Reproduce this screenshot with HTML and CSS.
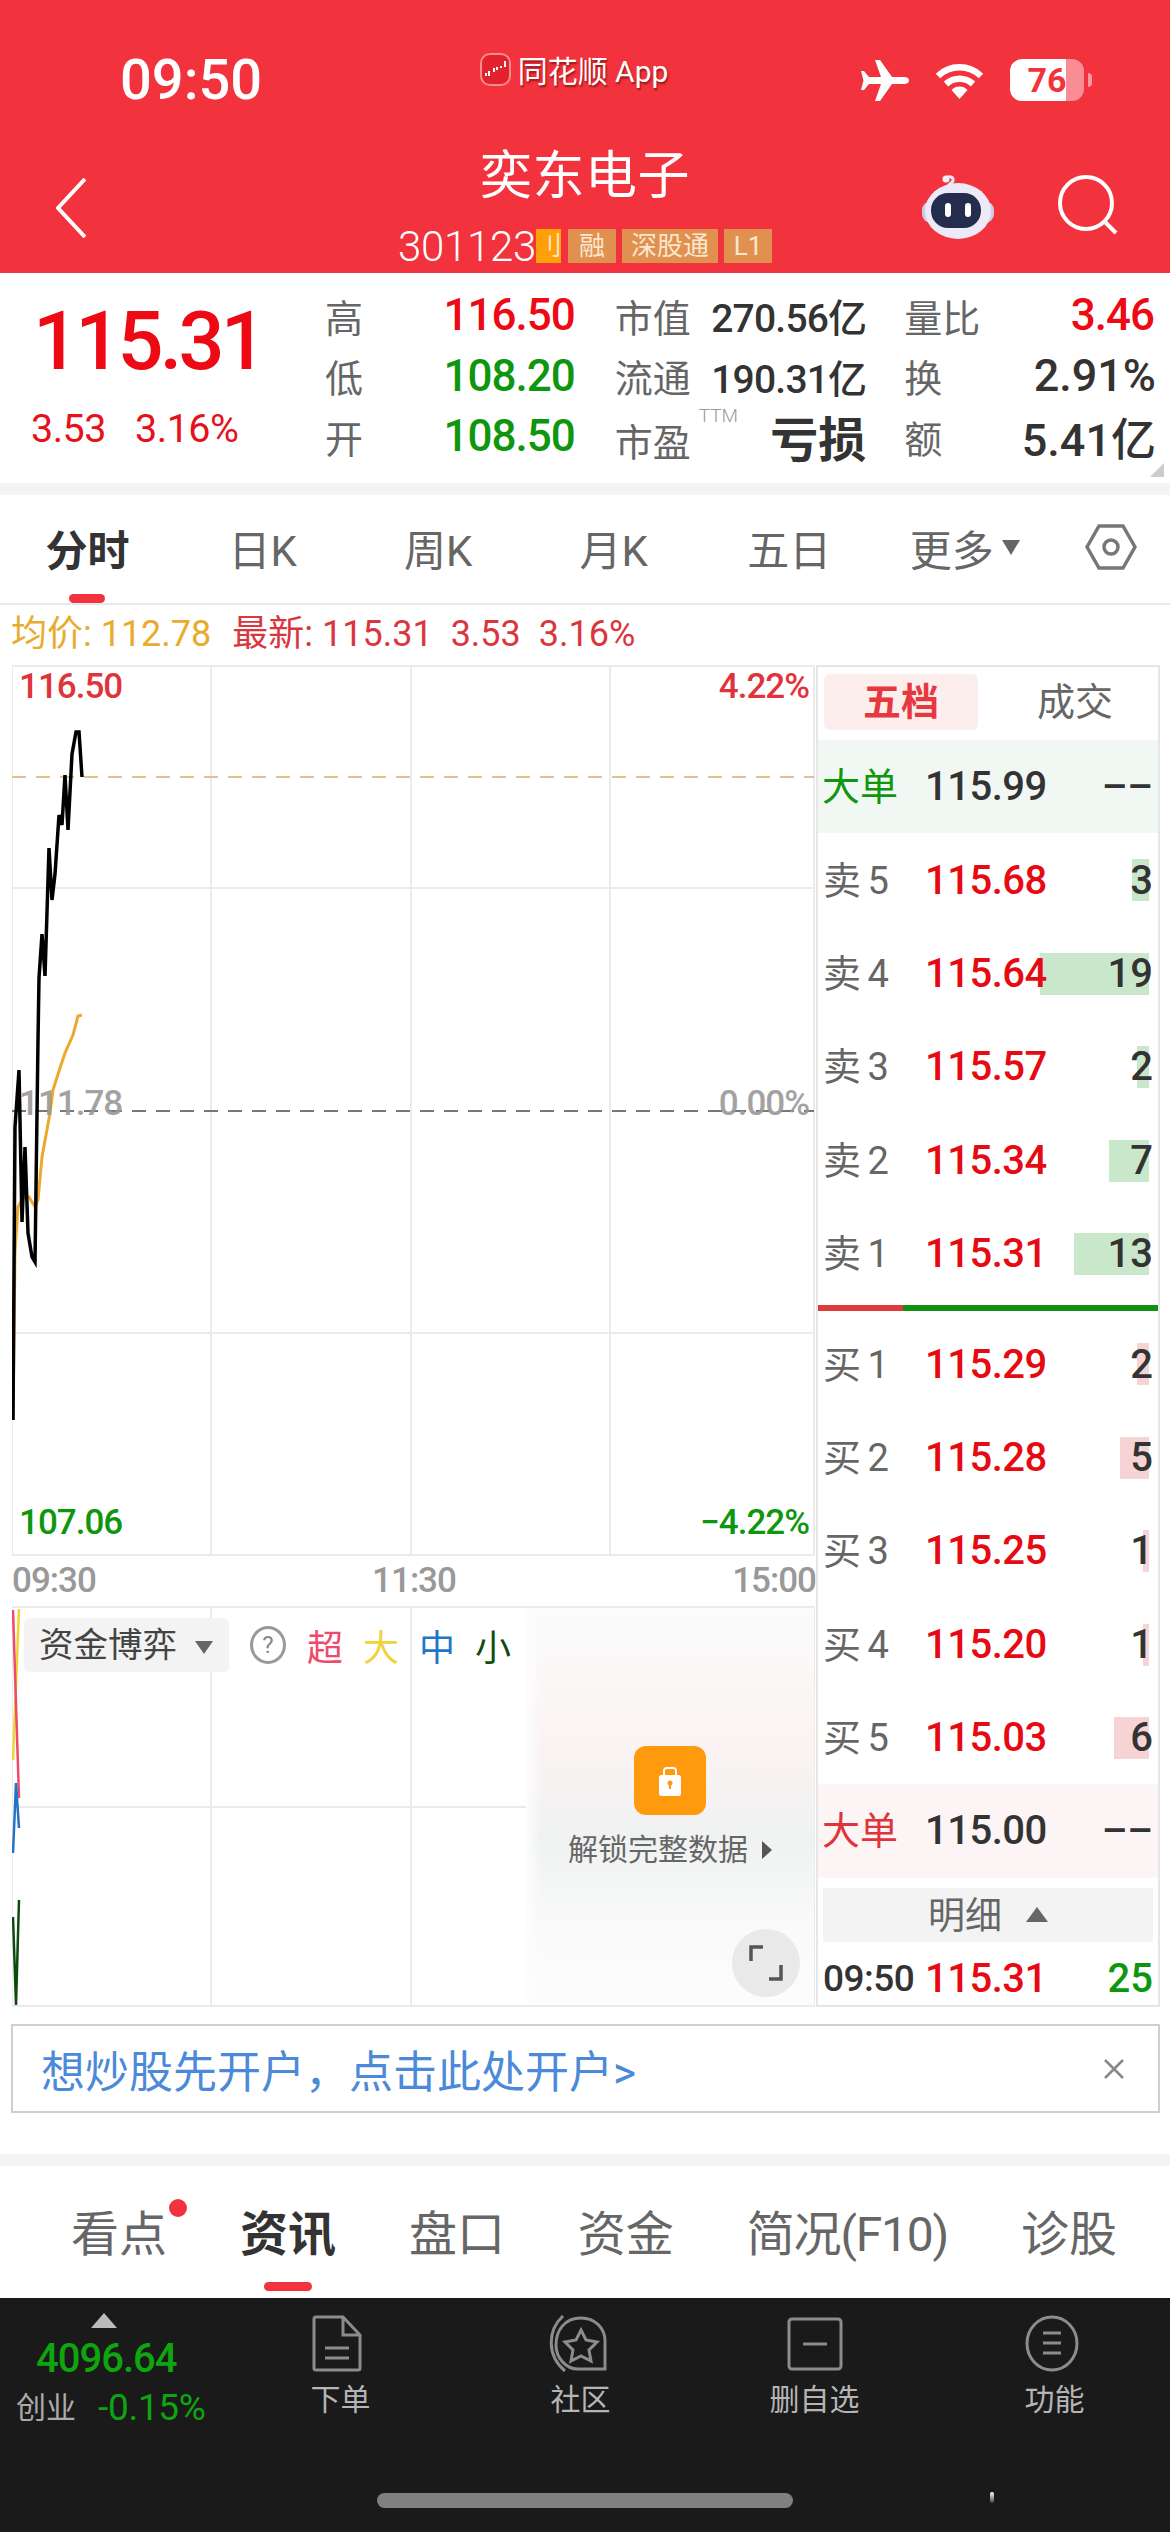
FILE: index.html

```html
<!DOCTYPE html>
<html lang="zh-CN">
<head>
  <meta charset="UTF-8" />
  <meta name="viewport" content="width=device-width, initial-scale=1.0">
  <title>奕东电子</title>
  <link rel="stylesheet" href="styles.css">
</head>
<body>

  <header class="header">
    <div class="status">
      <div class="time">09:50</div>
      <div class="source">
        <svg class="source-logo" width="31" height="33" viewBox="0 0 31 33">
          <rect x="1" y="1" width="29" height="31" rx="9" fill="#e2222c" stroke="#f98b8f" stroke-width="2"/>
          <path d="M6 23v-3M9 23v-5M14 19v-4M17 17v-3M21 15v-2M25 14v-6" stroke="#fff" stroke-width="2" fill="none"/>
        </svg>
        <span>同花顺 App</span>
      </div>
      <div class="status-icons">
        <svg width="48" height="41" viewBox="0 0 48 41"><path fill="#fff" d="M48 20.5c0-2.5-2.5-3.5-5-3.5H31L19 0h-5l6 17H8L3 11H0l2.5 9.5L0 30h3l5-6h12l-6 17h5l12-17h12c2.500 0 5-1 5-3.500z"/></svg>
        <svg width="51" height="37" viewBox="0 0 51 37">
          <path d="M4 14a31 31 0 0 1 43 0M12 22a20 20 0 0 1 27 0" fill="none" stroke="#fff" stroke-width="6.500"/>
          <path d="M25.500 37l-8-9a11 11 0 0 1 16 0z" fill="#fff"/>
        </svg>
        <div class="battery">76</div>
      </div>
    </div>

    <div class="nav">
      <div class="nav-back">
        <svg width="30" height="60" viewBox="0 0 30 60"><path d="M29 1L2 30l27 29" fill="none" stroke="#fff" stroke-width="4"/></svg>
      </div>
      <div class="nav-title">
        <div class="stock-name">奕东电子</div>
        <div class="stock-code">
          <span class="code">301123</span>
          <span class="tag tag-cut">刂</span>
          <span class="tag tag-rong">融</span>
          <span class="tag tag-sgt">深股通</span>
          <span class="tag tag-l1">L1</span>
        </div>
      </div>
      <div class="nav-actions">
        <svg width="72" height="64" viewBox="0 0 72 64">
          <path d="M26 12c1-5 6-3 5-8-1-3-6-3-7 0" fill="none" stroke="#e8e4f5" stroke-width="3"/>
          <circle cx="24" cy="4" r="3.500" fill="#f3f0fb"/>
          <rect x="0" y="26" width="72" height="22" rx="9" fill="#cfcbe8"/>
          <ellipse cx="36" cy="36" rx="33" ry="28" fill="#edeaf8"/>
          <rect x="9" y="18" width="50" height="35" rx="17" fill="#242d4d"/>
          <rect x="23" y="28" width="6" height="14" rx="3" fill="#fff"/>
          <rect x="43" y="28" width="6" height="14" rx="3" fill="#fff"/>
        </svg>
        <svg width="60" height="60" viewBox="0 0 60 60">
          <circle cx="28" cy="28" r="26" fill="none" stroke="#fff" stroke-width="4"/>
          <path d="M47 47l11 11" stroke="#fff" stroke-width="4" fill="none"/>
        </svg>
      </div>
    </div>
  </header>

  <section class="quote">
    <div class="quote-main">
      <div class="last-price">115.31</div>
      <div class="change"><span>3.53</span><span>3.16%</span></div>
    </div>
    <div class="quote-grid">
      <div class="cell"><span class="cell-label">高</span><span class="cell-value up">116.50</span></div>
      <div class="cell"><span class="cell-label">市值</span><span class="cell-value small">270.56亿</span></div>
      <div class="cell"><span class="cell-label">量比</span><span class="cell-value up">3.46</span></div>
      <div class="cell"><span class="cell-label">低</span><span class="cell-value down">108.20</span></div>
      <div class="cell"><span class="cell-label">流通</span><span class="cell-value small">190.31亿</span></div>
      <div class="cell"><span class="cell-label">换</span><span class="cell-value">2.91%</span></div>
      <div class="cell"><span class="cell-label">开</span><span class="cell-value down">108.50</span></div>
      <div class="cell"><span class="cell-label pe">市盈<sup>TTM</sup></span><span class="cell-value loss">亏损</span></div>
      <div class="cell"><span class="cell-label">额</span><span class="cell-value">5.41亿</span></div>
    </div>
    <div class="corner"></div>
  </section>

  <div class="band"></div>

  <nav class="period-tabs">
    <div class="period active">分时</div>
    <div class="period">日K</div>
    <div class="period">周K</div>
    <div class="period">月K</div>
    <div class="period">五日</div>
    <div class="period">更多<i class="caret-down"></i></div>
    <div class="period">
      <svg width="52" height="46" viewBox="0 0 52 46">
        <path d="M14 2h24l12 21-12 21H14L2 23z" fill="none" stroke="#777" stroke-width="3.500"/>
        <circle cx="26" cy="23" r="7" fill="none" stroke="#777" stroke-width="3.500"/>
      </svg>
    </div>
  </nav>

  <div class="legend">
    <span class="avg">均价: 112.78</span>
    <span class="latest"><span>最新: 115.31</span><span>3.53</span><span>3.16%</span></span>
  </div>

  <main class="board">
    <div class="charts">
      <div class="price-chart">
        <svg width="803" height="891" viewBox="12 665 803 891">
          <g stroke="#ebebeb" stroke-width="2" fill="none">
            <path d="M12 666H814M12 888H814M12 1333H814M12 1555H814"/>
            <path d="M12 665V1556M211 665V1556M411 665V1556M610 665V1556M814 665V1556"/>
          </g>
          <path d="M12 777H814" stroke="#e6c08c" stroke-width="2" stroke-dasharray="14 10"/>
          <path d="M12 1111H814" stroke="#777" stroke-width="2" stroke-dasharray="14 10"/>
          <path d="M13 1420L15 1253 18 1207 23 1198 29 1197 35 1207 38 1200 42 1157 50 1113 53 1090 60 1068 65 1053 73 1035 78 1016 82 1015" fill="none" stroke="#eba92f" stroke-width="3"/>
          <path d="M13 1420L15 1127 19 1070 22 1222 25 1147 28 1233 32 1257 35 1262 38 1040 39 978 42 934 45 976 49 848 52 900 55 874 59 815 62 825 65 775 68 830 72 754 76 732 79 732 82 777" fill="none" stroke="#000" stroke-width="3.500"/>
        </svg>
        <span class="axis-label top left up-soft">116.50</span>
        <span class="axis-label top right up-soft">4.22%</span>
        <span class="axis-label mid left flat">111.78</span>
        <span class="axis-label mid right flat">0.00%</span>
        <span class="axis-label bottom left down">107.06</span>
        <span class="axis-label bottom right down">−4.22%</span>
      </div>

      <div class="time-axis"><span>09:30</span><span>11:30</span><span>15:00</span></div>

      <div class="flow-chart">
        <svg width="803" height="401" viewBox="12 1606 803 401">
          <g stroke="#ebebeb" stroke-width="2" fill="none">
            <path d="M12 1607H814M12 1807H814M12 2006H814"/>
            <path d="M12 1606V2007M211 1606V2007M411 1606V2007M814 1606V2007"/>
          </g>
          <path d="M19 1609L13 1760" stroke="#f3d233" stroke-width="2.500" fill="none"/>
          <path d="M13 1610L19 1798" stroke="#ee4b68" stroke-width="2.500" fill="none"/>
          <path d="M13 1853L16 1783 19 1828" stroke="#2274c4" stroke-width="2.500" fill="none"/>
          <path d="M13 1917L16 2005 19 1900" stroke="#0e4a0c" stroke-width="2.500" fill="none"/>
        </svg>

        <div class="flow-tools">
          <div class="flow-select">资金博弈<i class="caret-down big"></i></div>
          <div class="help">?</div>
          <span class="size-super">超</span>
          <span class="size-large">大</span>
          <span class="size-mid">中</span>
          <span class="size-small">小</span>
        </div>

        <div class="lock-panel">
          <div class="lock-badge">
            <svg width="22" height="30" viewBox="0 0 22 30">
              <path d="M5 10V5a3 3 0 0 1 3-3h6a3 3 0 0 1 3 3v5" fill="none" stroke="#fff" stroke-width="2"/>
              <rect x="0" y="9" width="22" height="21" rx="2.500" fill="#fff"/>
              <circle cx="11" cy="17" r="2.500" fill="#ff9a0e"/>
              <rect x="10" y="18" width="2" height="5" fill="#ff9a0e"/>
            </svg>
          </div>
          <div class="lock-text">解锁完整数据<i class="caret-right"></i></div>
        </div>

        <div class="expand">
          <svg width="34" height="36" viewBox="0 0 34 36">
            <path d="M14 2H2v14M32 20v14H20" fill="none" stroke="#555" stroke-width="3.500"/>
          </svg>
        </div>
      </div>
    </div>

    <aside class="book">
      <div class="book-tabs">
        <div class="book-tab active">五档</div>
        <div class="book-tab">成交</div>
      </div>

      <div class="row big-sell"><span class="row-label">大单</span><span class="row-price flat-price">115.99</span><span class="row-qty">––</span></div>

      <div class="row"><span class="row-label">卖 5</span><span class="row-price">115.68</span><i class="bar sell" style="width:17px"></i><span class="row-qty">3</span></div>
      <div class="row"><span class="row-label">卖 4</span><span class="row-price">115.64</span><i class="bar sell" style="width:109px"></i><span class="row-qty">19</span></div>
      <div class="row"><span class="row-label">卖 3</span><span class="row-price">115.57</span><i class="bar sell" style="width:12px"></i><span class="row-qty">2</span></div>
      <div class="row"><span class="row-label">卖 2</span><span class="row-price">115.34</span><i class="bar sell" style="width:40px"></i><span class="row-qty">7</span></div>
      <div class="row"><span class="row-label">卖 1</span><span class="row-price">115.31</span><i class="bar sell" style="width:75px"></i><span class="row-qty">13</span></div>

      <div class="book-split"></div>

      <div class="row"><span class="row-label">买 1</span><span class="row-price">115.29</span><i class="bar buy" style="width:12px"></i><span class="row-qty">2</span></div>
      <div class="row"><span class="row-label">买 2</span><span class="row-price">115.28</span><i class="bar buy" style="width:29px"></i><span class="row-qty">5</span></div>
      <div class="row"><span class="row-label">买 3</span><span class="row-price">115.25</span><i class="bar buy" style="width:6px"></i><span class="row-qty">1</span></div>
      <div class="row"><span class="row-label">买 4</span><span class="row-price">115.20</span><i class="bar buy" style="width:6px"></i><span class="row-qty">1</span></div>
      <div class="row"><span class="row-label">买 5</span><span class="row-price">115.03</span><i class="bar buy" style="width:35px"></i><span class="row-qty">6</span></div>

      <div class="row big-buy"><span class="row-label">大单</span><span class="row-price flat-price">115.00</span><span class="row-qty">––</span></div>

      <div class="detail-head"><span>明细</span><i class="caret-up"></i></div>
      <div class="row detail-row"><span class="row-label">09:50</span><span class="row-price">115.31</span><span class="row-qty green">25</span></div>
    </aside>
  </main>

  <div class="banner">
    <span>想炒股先开户，点击此处开户&gt;</span>
    <svg width="22" height="22" viewBox="0 0 22 22"><path d="M2 2l18 18M20 2L2 20" stroke="#888" stroke-width="2.500" fill="none"/></svg>
  </div>

  <div class="band band-low"></div>

  <nav class="info-tabs">
    <div class="info-tab has-dot">看点</div>
    <div class="info-tab active">资讯</div>
    <div class="info-tab">盘口</div>
    <div class="info-tab">资金</div>
    <div class="info-tab f10">简况(F10)</div>
    <div class="info-tab">诊股</div>
  </nav>

  <footer class="dock">
    <div class="index">
      <i class="index-arrow"></i>
      <div class="index-value">4096.64</div>
      <div class="index-row"><span class="index-name">创业</span><span class="index-pct">-0.15%</span></div>
    </div>
    <div class="dock-item">
      <svg class="doc-icon" width="50" height="57" viewBox="0 0 50 57">
        <path d="M4 2h27l17 18v33a2 2 0 0 1-2 2H4a2 2 0 0 1-2-2V4a2 2 0 0 1 2-2zM31 2v18h17M13 33h24M13 43h24" fill="none" stroke="#8c8c8c" stroke-width="3"/>
      </svg>
      <span>下单</span>
    </div>
    <div class="dock-item nudge">
      <svg width="60" height="57" viewBox="0 0 60 57">
        <path d="M15 1C-1 16-1 41 17 56" fill="none" stroke="#8c8c8c" stroke-width="3"/>
        <path d="M33 3C17 3 8 15 8 30c0 13 10 24 22 24h27V26C57 13 47 3 33 3z" fill="none" stroke="#8c8c8c" stroke-width="3"/>
        <path d="M33 15l5 10 11 2-8 8 2 11-10-5-10 5 2-11-8-8 11-2z" fill="none" stroke="#8c8c8c" stroke-width="3"/>
      </svg>
      <span>社区</span>
    </div>
    <div class="dock-item">
      <svg width="56" height="57" viewBox="0 0 56 57">
        <rect x="2" y="4" width="52" height="50" rx="3" fill="none" stroke="#8c8c8c" stroke-width="3"/>
        <path d="M16 29h24" stroke="#8c8c8c" stroke-width="3"/>
      </svg>
      <span>删自选</span>
    </div>
    <div class="dock-item nudge">
      <svg width="54" height="57" viewBox="0 0 54 57">
        <ellipse cx="27" cy="28.500" rx="25" ry="26.500" fill="none" stroke="#8c8c8c" stroke-width="3"/>
        <path d="M18 18h18M18 28h18M18 38h18" stroke="#8c8c8c" stroke-width="3"/>
      </svg>
      <span>功能</span>
    </div>
    <div class="home-bar"></div>
    <div class="spark"></div>
  </footer>

</body>
</html>
```

FILE: styles.css

```css
* {
  box-sizing: border-box;
}

html, body {
  margin: 0;
  padding: 0;
}

body {
  width: 1170px;
  height: 2532px;
  overflow: hidden;
  background: #fff;
  color: #333;
  font-family: Roboto, "Noto Sans CJK SC", sans-serif;
}

i {
  display: inline-block;
  font-style: normal;
}

/* carets */
.caret-down {
  width: 0;
  height: 0;
  margin-left: 8px;
  border-left: 9px solid transparent;
  border-right: 9px solid transparent;
  border-top: 15px solid #666;
  vertical-align: 6px;
}

.caret-down.big {
  margin-left: 18px;
  border-left-width: 9px;
  border-right-width: 9px;
  border-top-width: 13px;
  vertical-align: 3px;
}

.caret-up {
  width: 0;
  height: 0;
  margin-left: 24px;
  border-left: 11px solid transparent;
  border-right: 11px solid transparent;
  border-bottom: 15px solid #666;
}

.caret-right {
  width: 0;
  height: 0;
  margin-left: 14px;
  border-top: 9px solid transparent;
  border-bottom: 9px solid transparent;
  border-left: 10px solid #555;
  vertical-align: 1px;
}

/* header */
.header {
  height: 273px;
  background: #f2323c;
  color: #fff;
}

.status {
  height: 140px;
  padding-top: 20px;
  display: grid;
  grid-template-columns: 1fr auto 1fr;
  align-items: center;
}

.time {
  padding-left: 120px;
  font-size: 56px;
  font-weight: 500;
}

.source {
  display: flex;
  align-items: center;
  gap: 7px;
  margin-bottom: 22px;
  padding-right: 22px;
  font-size: 30px;
  text-shadow: 1px 2px 2px rgba(90, 0, 0, 0.6);
}

.status-icons {
  display: flex;
  align-items: center;
  justify-content: flex-end;
  gap: 25px;
  padding-right: 86px;
}

.battery {
  position: relative;
  width: 74px;
  height: 42px;
  border-radius: 12px;
  background: linear-gradient(to right, #fff 76%, rgba(255, 255, 255, 0.45) 76%);
  color: #f2323c;
  font-size: 34px;
  font-weight: 700;
  line-height: 42px;
  text-align: center;
}

.battery::after {
  content: "";
  position: absolute;
  right: -8px;
  top: 14px;
  width: 4px;
  height: 14px;
  border-radius: 0 4px 4px 0;
  background: rgba(255, 255, 255, 0.5);
}

.nav {
  height: 133px;
  display: grid;
  grid-template-columns: 1fr auto 1fr;
}

.nav-back {
  padding: 38px 0 0 56px;
}

.nav-title {
  padding-top: 6px;
  text-align: center;
}

.stock-name {
  height: 62px;
  font-size: 52px;
  line-height: 62px;
  letter-spacing: 0.5px;
}

.stock-code {
  display: flex;
  align-items: center;
  height: 34px;
  margin-top: 21px;
}

.code {
  font-size: 42px;
  font-weight: 300;
  letter-spacing: -0.3px;
}

.tag {
  height: 34px;
  margin-left: 6px;
  padding: 0 7px;
  background: #e09150;
  color: #fbe6cf;
  font-size: 26px;
  line-height: 34px;
}

.tag-cut {
  width: 25px;
  margin-left: 0;
  padding: 0;
  overflow: hidden;
  background: #ff9f0a;
  text-align: center;
}

.tag-rong {
  width: 48px;
  margin-left: 7px;
  padding: 0 11px;
}

.tag-sgt {
  width: 96px;
  padding: 0 9px;
}

.tag-l1 {
  width: 48px;
  padding: 0 9px;
}

.nav-actions {
  display: flex;
  justify-content: flex-end;
  align-items: flex-start;
  gap: 64px;
  padding: 35px 52px 0 0;
}

/* quote block */
.quote {
  position: relative;
  height: 210px;
  padding: 12px 16px 0 0;
  display: flex;
}

.quote-main {
  width: 325px;
  padding-left: 33px;
}

.last-price {
  height: 82px;
  margin-top: 16px;
  color: #ee0a14;
  font-size: 81px;
  font-weight: 500;
  line-height: 82px;
  letter-spacing: -3.8px;
}

.change {
  display: flex;
  gap: 29px;
  margin: 23px 0 0 -2px;
  color: #e5121c;
  font-size: 39.500px;
  line-height: 46px;
  letter-spacing: -0.5px;
}

.quote-grid {
  flex: 1;
  display: grid;
  grid-template-columns: repeat(3, 1fr);
  grid-auto-rows: 60.5px;
  column-gap: 40px;
}

.cell {
  display: flex;
  align-items: center;
  justify-content: space-between;
}

.cell-label {
  color: #666;
  font-size: 38px;
  white-space: nowrap;
}

.cell-label.pe {
  position: relative;
  padding-top: 6px;
}

.pe sup {
  position: absolute;
  left: 84px;
  top: 0;
  color: #999;
  font-size: 19px;
  line-height: 20px;
  font-weight: 300;
}

.cell-value {
  margin-right: -2px;
  color: #333;
  font-size: 45px;
  font-weight: 500;
}

.cell-value.up,
.cell-value.down {
  margin-right: 0;
  font-size: 44px;
  letter-spacing: -1px;
}

.cell-value.small {
  font-size: 39px;
  letter-spacing: -0.8px;
}

.cell-value.loss {
  font-size: 48px;
  font-weight: 700;
}

.up {
  color: #ee0a14;
}

.down {
  color: #0f960f;
}

.corner {
  position: absolute;
  right: 6px;
  bottom: 6px;
  width: 0;
  height: 0;
  border-left: 14px solid transparent;
  border-bottom: 14px solid #ccc;
}

.band {
  height: 12px;
  background: #f4f4f4;
}

.band-low {
  margin-top: 41px;
}

/* period tabs */
.period-tabs {
  height: 110px;
  padding-bottom: 4px;
  display: grid;
  grid-template-columns: 175px repeat(5, 175.5px) 1fr;
  border-bottom: 2px solid #e8e8e8;
}

.period {
  position: relative;
  display: flex;
  align-items: center;
  justify-content: center;
  color: #666;
  font-size: 42px;
  white-space: nowrap;
}

.period:last-child {
  padding-left: 0;
}

.period.active {
  color: #333;
  font-weight: 700;
}

.period.active::after {
  content: "";
  position: absolute;
  left: 69px;
  bottom: -4px;
  width: 36px;
  height: 9px;
  border-radius: 5px;
  background: #f2323c;
}

.legend {
  height: 60px;
  padding: 0 0 2px 11px;
  display: flex;
  align-items: center;
  gap: 21px;
  font-size: 36px;
  line-height: 52px;
}

.avg {
  color: #e9ab2c;
}

.latest {
  display: flex;
  align-items: baseline;
  gap: 18px;
  color: #d9363e;
}

/* charts */
.board {
  display: flex;
  height: 1342px;
  padding-left: 12px;
}

.charts {
  width: 804px;
}

.price-chart,
.flow-chart {
  position: relative;
}

.price-chart svg,
.flow-chart svg {
  display: block;
}

.axis-label {
  position: absolute;
  font-size: 35px;
  font-weight: 500;
  line-height: 40px;
  letter-spacing: -1px;
}

.axis-label.left {
  left: 7px;
}

.axis-label.right {
  right: 7px;
}

.axis-label.top {
  top: 2px;
}

.axis-label.mid {
  top: 419px;
}

.axis-label.bottom {
  top: 838px;
}

.up-soft {
  color: #df343b;
}

.flat {
  color: #999;
  opacity: 0.9;
}

.time-axis {
  height: 50px;
  padding: 0 0 2px;
  display: flex;
  justify-content: space-between;
  align-items: center;
  color: #999;
  font-size: 35px;
  font-weight: 500;
  letter-spacing: -1px;
}

.flow-tools {
  position: absolute;
  left: 12px;
  top: 12px;
  display: flex;
  align-items: center;
  font-size: 36px;
  white-space: nowrap;
}

.flow-select {
  width: 205px;
  height: 54px;
  padding-left: 15px;
  border-radius: 6px;
  background: #f3f3f3;
  color: #444;
  font-size: 34.500px;
  line-height: 54px;
}

.help {
  width: 36px;
  height: 38px;
  margin: 0 21px 0 21px;
  border: 3px solid #999;
  border-radius: 50%;
  color: #888;
  font-size: 24px;
  line-height: 32px;
  text-align: center;
}

.flow-tools span {
  width: 56px;
}

.size-super {
  color: #ef4a6c;
}

.size-large {
  color: #f1d23c;
}

.size-mid {
  color: #1f77c9;
}

.size-small {
  color: #0f4d0f;
}

.lock-panel {
  position: absolute;
  left: 514px;
  top: 2px;
  right: 2px;
  bottom: 2px;
  padding-top: 138px;
  display: flex;
  flex-direction: column;
  align-items: center;
  background:
    linear-gradient(to right, #fdfdfd, rgba(255, 255, 255, 0) 5%),
    linear-gradient(#fbfbfb, #fbf3f3 35%, #f0f2f2 58%, #fafafa 82%, #fcfcfc);
}

.lock-badge {
  width: 72px;
  height: 69px;
  display: flex;
  align-items: center;
  justify-content: center;
  border-radius: 12px;
  background: #ff9a0e;
}

.lock-text {
  margin-top: 14px;
  color: #666;
  font-size: 30px;
  line-height: 42px;
  white-space: nowrap;
}

.expand {
  position: absolute;
  right: 16px;
  bottom: 10px;
  width: 68px;
  height: 68px;
  display: flex;
  align-items: center;
  justify-content: center;
  border-radius: 50%;
  background: #e9e9e9;
}

/* order book */
.book {
  width: 344px;
  height: 1342px;
  border: 2px solid #e6e6e6;
}

.book-tabs {
  height: 73px;
  padding: 7px 0 0 6px;
  display: flex;
  font-size: 38px;
}

.book-tab {
  height: 56px;
  line-height: 56px;
  text-align: center;
  color: #666;
  width: 154px;
}

.book-tab.active {
  border-radius: 6px;
  background: #fdeeee;
  color: #e8383f;
  font-weight: 700;
}

.book-tab + .book-tab {
  margin-left: 20px;
}

.row {
  position: relative;
  height: 93.400px;
  padding: 0 5px;
  display: flex;
  align-items: center;
  font-size: 40px;
}

.row-label {
  position: relative;
  top: -3px;
  width: 104px;
  color: #666;
  font-size: 38px;
  word-spacing: -3px;
  white-space: nowrap;
  flex: none;
}

.row-price {
  position: relative;
  left: -2px;
  color: #e60a12;
  font-weight: 500;
  letter-spacing: -0.5px;
  z-index: 1;
}

.row-qty {
  position: relative;
  margin-left: auto;
  color: #333;
  font-weight: 500;
}

.bar {
  position: absolute;
  right: 9px;
  top: 26px;
  height: 42px;
}

.bar.sell {
  background: #c9e7ca;
}

.bar.buy {
  background: #f6d4d5;
}

.big-sell {
  background: #f1f8f3;
}

.big-sell .row-label {
  left: -1px;
  color: #0f960f;
}

.big-buy {
  background: #fdf5f5;
}

.big-buy .row-label {
  left: -1px;
  color: #e0343b;
}

.flat-price {
  color: #333;
}

.book-split {
  height: 6px;
  margin: 5px 0 6px;
  background: linear-gradient(to right, #df3a3e 25%, #129012 25%);
}

.detail-head {
  height: 54px;
  margin: 10px 5px 0;
  display: flex;
  align-items: center;
  justify-content: center;
  background: #f3f3f3;
  color: #666;
  font-size: 37px;
}

.detail-head span {
  position: relative;
  top: -2px;
}

.detail-row {
  height: 68px;
  padding-top: 5px;
}

.detail-row .row-label {
  top: 0;
  color: #333;
  font-size: 37px;
  font-weight: 500;
  letter-spacing: -0.5px;
  font-family: Roboto, sans-serif;
}

.green {
  color: #0f960f;
}

/* banner */
.banner {
  width: 1149px;
  height: 89px;
  margin: 17px 0 0 11px;
  padding: 0 33px 0 28px;
  display: flex;
  align-items: center;
  justify-content: space-between;
  border: 2px solid #cfcfcf;
  color: #4a8ad8;
  font-size: 44px;
}

/* info tabs */
.info-tabs {
  height: 132px;
  padding: 0 53px 4px 71px;
  display: flex;
  align-items: center;
  justify-content: space-between;
}

.info-tab {
  position: relative;
  color: #666;
  font-size: 48px;
  white-space: nowrap;
}

.info-tab.f10 {
  letter-spacing: -1.2px;
}

.info-tab.active {
  color: #333;
  font-weight: 700;
}

.info-tab.active::after {
  content: "";
  position: absolute;
  left: 24px;
  bottom: -26px;
  width: 48px;
  height: 9px;
  border-radius: 5px;
  background: #f2323c;
}

.info-tab.has-dot::after {
  content: "";
  position: absolute;
  right: -20px;
  top: 4px;
  width: 18px;
  height: 18px;
  border-radius: 50%;
  background: #f2323c;
}

/* bottom dock */
.dock {
  position: relative;
  height: 234px;
  padding-top: 17px;
  display: grid;
  grid-template-columns: 222px repeat(4, 237px);
  background: #1a1a1a;
}

.index {
  margin-top: -2px;
  padding-left: 16px;
}

.index-arrow {
  display: block;
  width: 0;
  height: 0;
  margin-left: 75px;
  border-left: 13px solid transparent;
  border-right: 13px solid transparent;
  border-bottom: 15px solid #bbb;
}

.index-value {
  margin: 11px 0 0 20px;
  color: #0fa50f;
  font-size: 40px;
  font-weight: 500;
  line-height: 40px;
  letter-spacing: -1px;
}

.index-row {
  display: flex;
  align-items: center;
  gap: 22px;
  margin-top: 9px;
  line-height: 40px;
}

.index-name {
  color: #aaa;
  font-size: 30px;
}

.index-pct {
  color: #0fa50f;
  font-size: 37px;
  letter-spacing: -0.3px;
}

.dock-item {
  display: flex;
  flex-direction: column;
  align-items: center;
  color: #b5b5b5;
  font-size: 30px;
  line-height: 36px;
}

.dock-item span {
  margin-top: 10px;
}

.dock-item.nudge span {
  margin-left: 6px;
}

.doc-icon {
  margin-right: 8px;
}

.home-bar {
  position: absolute;
  left: 377px;
  top: 195px;
  width: 416px;
  height: 15px;
  border-radius: 8px;
  background: #808080;
}

.spark {
  position: absolute;
  left: 990px;
  top: 194px;
  width: 4px;
  height: 11px;
  border-radius: 2px;
  background: linear-gradient(#fff, #444);
}
```
